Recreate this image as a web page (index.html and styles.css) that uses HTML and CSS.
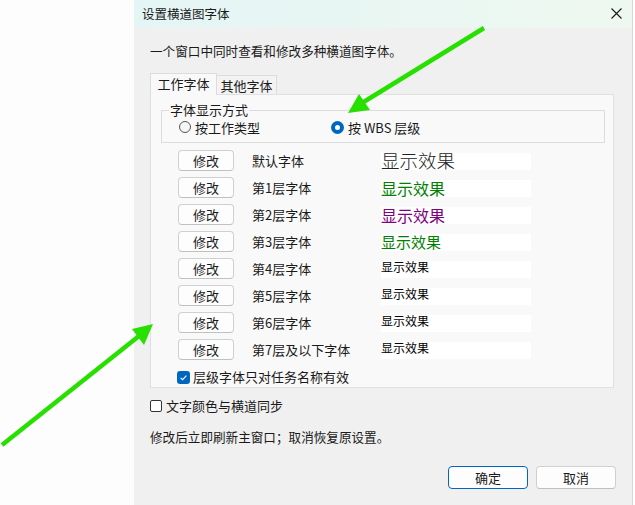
FILE: index.html
```html
<!DOCTYPE html>
<html lang="zh-CN">
<head>
  <meta charset="UTF-8" />
  <title>设置横道图字体</title>
  <link rel="stylesheet" href="styles.css">
</head>
<body>

  <div class="backdrop"></div>

  <!-- 对话框 -->
  <div class="dialog">
    <div class="titlebar">
      <span class="title">设置横道图字体</span>
      <svg class="close" width="11" height="11" viewBox="0 0 11 11">
        <path d="M0.5 0.5 L10.5 10.5 M10.5 0.5 L0.5 10.5" stroke="#1a1a1a" stroke-width="1.1" fill="none" />
      </svg>
    </div>

    <div class="content">
      <p class="intro">一个窗口中同时查看和修改多种横道图字体。</p>

      <div class="tabs">
        <div class="tab active">工作字体</div>
        <div class="tab">其他字体</div>
      </div>

      <div class="panel">
        <fieldset class="group">
          <legend>字体显示方式</legend>
          <div class="radios">
            <label class="radio"><span class="radio-dot"></span>按工作类型</label>
            <label class="radio checked"><span class="radio-dot"></span>按 WBS 层级</label>
          </div>
        </fieldset>

        <div class="rows">
          <div class="row">
            <button class="btn">修改</button>
            <span class="row-label">默认字体</span>
            <span class="preview"><span class="sample big">显示效果</span></span>
          </div>
          <div class="row">
            <button class="btn">修改</button>
            <span class="row-label">第1层字体</span>
            <span class="preview"><span class="sample mid green">显示效果</span></span>
          </div>
          <div class="row">
            <button class="btn">修改</button>
            <span class="row-label">第2层字体</span>
            <span class="preview"><span class="sample mid purple">显示效果</span></span>
          </div>
          <div class="row">
            <button class="btn">修改</button>
            <span class="row-label">第3层字体</span>
            <span class="preview"><span class="sample mid3 green">显示效果</span></span>
          </div>
          <div class="row">
            <button class="btn">修改</button>
            <span class="row-label">第4层字体</span>
            <span class="preview"><span class="sample small">显示效果</span></span>
          </div>
          <div class="row">
            <button class="btn">修改</button>
            <span class="row-label">第5层字体</span>
            <span class="preview"><span class="sample small">显示效果</span></span>
          </div>
          <div class="row">
            <button class="btn">修改</button>
            <span class="row-label">第6层字体</span>
            <span class="preview"><span class="sample small">显示效果</span></span>
          </div>
          <div class="row">
            <button class="btn">修改</button>
            <span class="row-label">第7层及以下字体</span>
            <span class="preview"><span class="sample small">显示效果</span></span>
          </div>
        </div>

        <label class="check inner-check">
          <span class="box checked">
            <svg width="13" height="13" viewBox="0 0 13 13">
              <path d="M3.6 6.8 L5.6 8.7 L9.4 4.6" stroke="#fff" stroke-width="1.1" fill="none" />
            </svg>
          </span>
          层级字体只对任务名称有效
        </label>
      </div>

      <label class="check sync-check">
        <span class="box"></span>
        文字颜色与横道同步
      </label>

      <p class="note">修改后立即刷新主窗口；取消恢复原设置。</p>

      <div class="actions">
        <button class="btn action primary">确定</button>
        <button class="btn action">取消</button>
      </div>
    </div>
  </div>

  <div class="edge"></div>

  <!-- 标注箭头 -->
  <svg class="arrows" width="635" height="505" viewBox="0 0 635 505">
    <line x1="484" y1="28" x2="362" y2="103" stroke="#27e000" stroke-width="4.5" />
    <polygon points="348,113 359,94 370,110" fill="#27e000" />
    <line x1="2" y1="445" x2="139" y2="336" stroke="#27e000" stroke-width="4.5" />
    <polygon points="153,324 132,329 144,345" fill="#27e000" />
  </svg>

</body>
</html>
```

FILE: styles.css
```css
body {
  margin: 0;
  width: 635px;
  height: 505px;
  display: flex;
  overflow: hidden;
  background: #fdfdfd;
  font-family: 'Noto Sans CJK SC', 'Noto Sans', sans-serif;
  font-size: 13px;
  color: #1a1a1a;
  position: relative;
}

.backdrop {
  width: 134px;
  flex: none;
}

.dialog {
  width: 498px;
  flex: none;
  background: #f0f0f0;
  border-right: 1px solid #d6d6d6;
  display: flex;
  flex-direction: column;
}

.titlebar {
  height: 28px;
  flex: none;
  background: linear-gradient(90deg, #e4f5f5, #eef8f0);
  display: flex;
  align-items: center;
  justify-content: space-between;
  padding: 0 10px 2px 8px;
  box-sizing: border-box;
}

.title { font-size: 12.5px; }

.content {
  padding: 0 16px;
}

.intro, .note {
  margin: 0;
  font-size: 12.6px;
  line-height: 18px;
}

.intro { margin-top: 14px; }

.tabs {
  display: flex;
  align-items: flex-end;
  margin-top: 13px;
  height: 21px;
}

.tab {
  box-sizing: border-box;
  border: 1px solid #dcdcdc;
  border-bottom: none;
  line-height: 18px;
  text-align: center;
}

.tab.active {
  width: 67px;
  height: 22px;
  background: #f9f9f9;
  margin-bottom: -1px;
  position: relative;
  z-index: 1;
  padding-top: 1px;
}

.tab:not(.active) {
  width: 60px;
  height: 19px;
  background: #f3f3f3;
  border-left: none;
  padding-top: 1px;
}

.panel {
  width: 464px;
  height: 294px;
  box-sizing: border-box;
  background: #f9f9f9;
  border: 1px solid #e0e0e0;
  padding: 7px 8px 0 10px;
}

.group {
  margin: 0;
  border: 1px solid #dcdcdc;
  padding: 1px 0 7px 0;
}

.group legend {
  margin-left: 7px;
  padding: 0 1px;
  line-height: 16px;
}

.radios {
  display: flex;
  height: 16px;
  align-items: center;
}

.radio {
  display: flex;
  align-items: center;
  gap: 4px;
}

.radio:first-child {
  margin-left: 17px;
  width: 152px;
}

.radio-dot {
  width: 12px;
  height: 12px;
  box-sizing: border-box;
  border: 1px solid #555;
  border-radius: 50%;
  background: #f6f6f6;
}

.radio.checked .radio-dot {
  width: 13px;
  height: 13px;
  border: 4px solid #0067c0;
  background: #fff;
}

.rows {
  display: flex;
  flex-direction: column;
  gap: 6px;
  margin-top: 7px;
}

.row {
  display: flex;
  align-items: flex-start;
  height: 21px;
}

.btn {
  font-family: inherit;
  font-size: 13px;
  color: #1a1a1a;
  background: #fdfdfd;
  border: 1px solid #d0d0d0;
  border-bottom-color: #c0c0c0;
  border-radius: 4px;
  padding: 0;
  line-height: 17px;
}

.row .btn {
  width: 56px;
  height: 21px;
  margin-left: 17px;
}

.row-label {
  width: 129px;
  margin-left: 18px;
  line-height: 22px;
}

.preview {
  width: 150px;
  height: 17px;
  margin-top: 3px;
  background: #fff;
  position: relative;
}

.sample {
  display: block;
  white-space: nowrap;
}

.sample.big {
  font-family: 'DejaVu Serif', 'Noto Sans CJK SC', serif;
  font-size: 18.5px;
  font-weight: 300;
  line-height: 18px;
  color: #222;
}

.sample.mid { font-size: 16px; line-height: 16px; }
.sample.mid3 { font-size: 15px; line-height: 16px; }

.sample.small {
  font-size: 12px;
  line-height: 12px;
  font-weight: 400;
  color: #000;
}

.green { color: #008000; }
.purple { color: #800080; }

.check {
  display: flex;
  align-items: center;
  gap: 3px;
  line-height: 16px;
}

.inner-check {
  margin: 9px 0 0 16px;
}

.box {
  width: 13px;
  height: 13px;
  box-sizing: border-box;
  border: 1px solid #333;
  border-radius: 2px;
  background: #fff;
  display: flex;
}

.box.checked {
  border: none;
  border-radius: 3px;
  background: #0067c0;
}

.sync-check {
  margin-top: 10px;
}

.sync-check .box { width: 12px; height: 12px; margin-right: 1px; }

.note { margin-top: 14px; }

.actions {
  display: flex;
  justify-content: flex-end;
  gap: 8px;
  margin-top: 20px;
  margin-right: 0;
}

.btn.action {
  width: 80px;
  height: 23px;
}

.btn.primary {
  border: 1px solid #0067c0;
}

.edge {
  width: 2px;
  flex: none;
  background: #fff;
}

.arrows {
  position: absolute;
  top: 0;
  left: 0;
  pointer-events: none;
}
```
